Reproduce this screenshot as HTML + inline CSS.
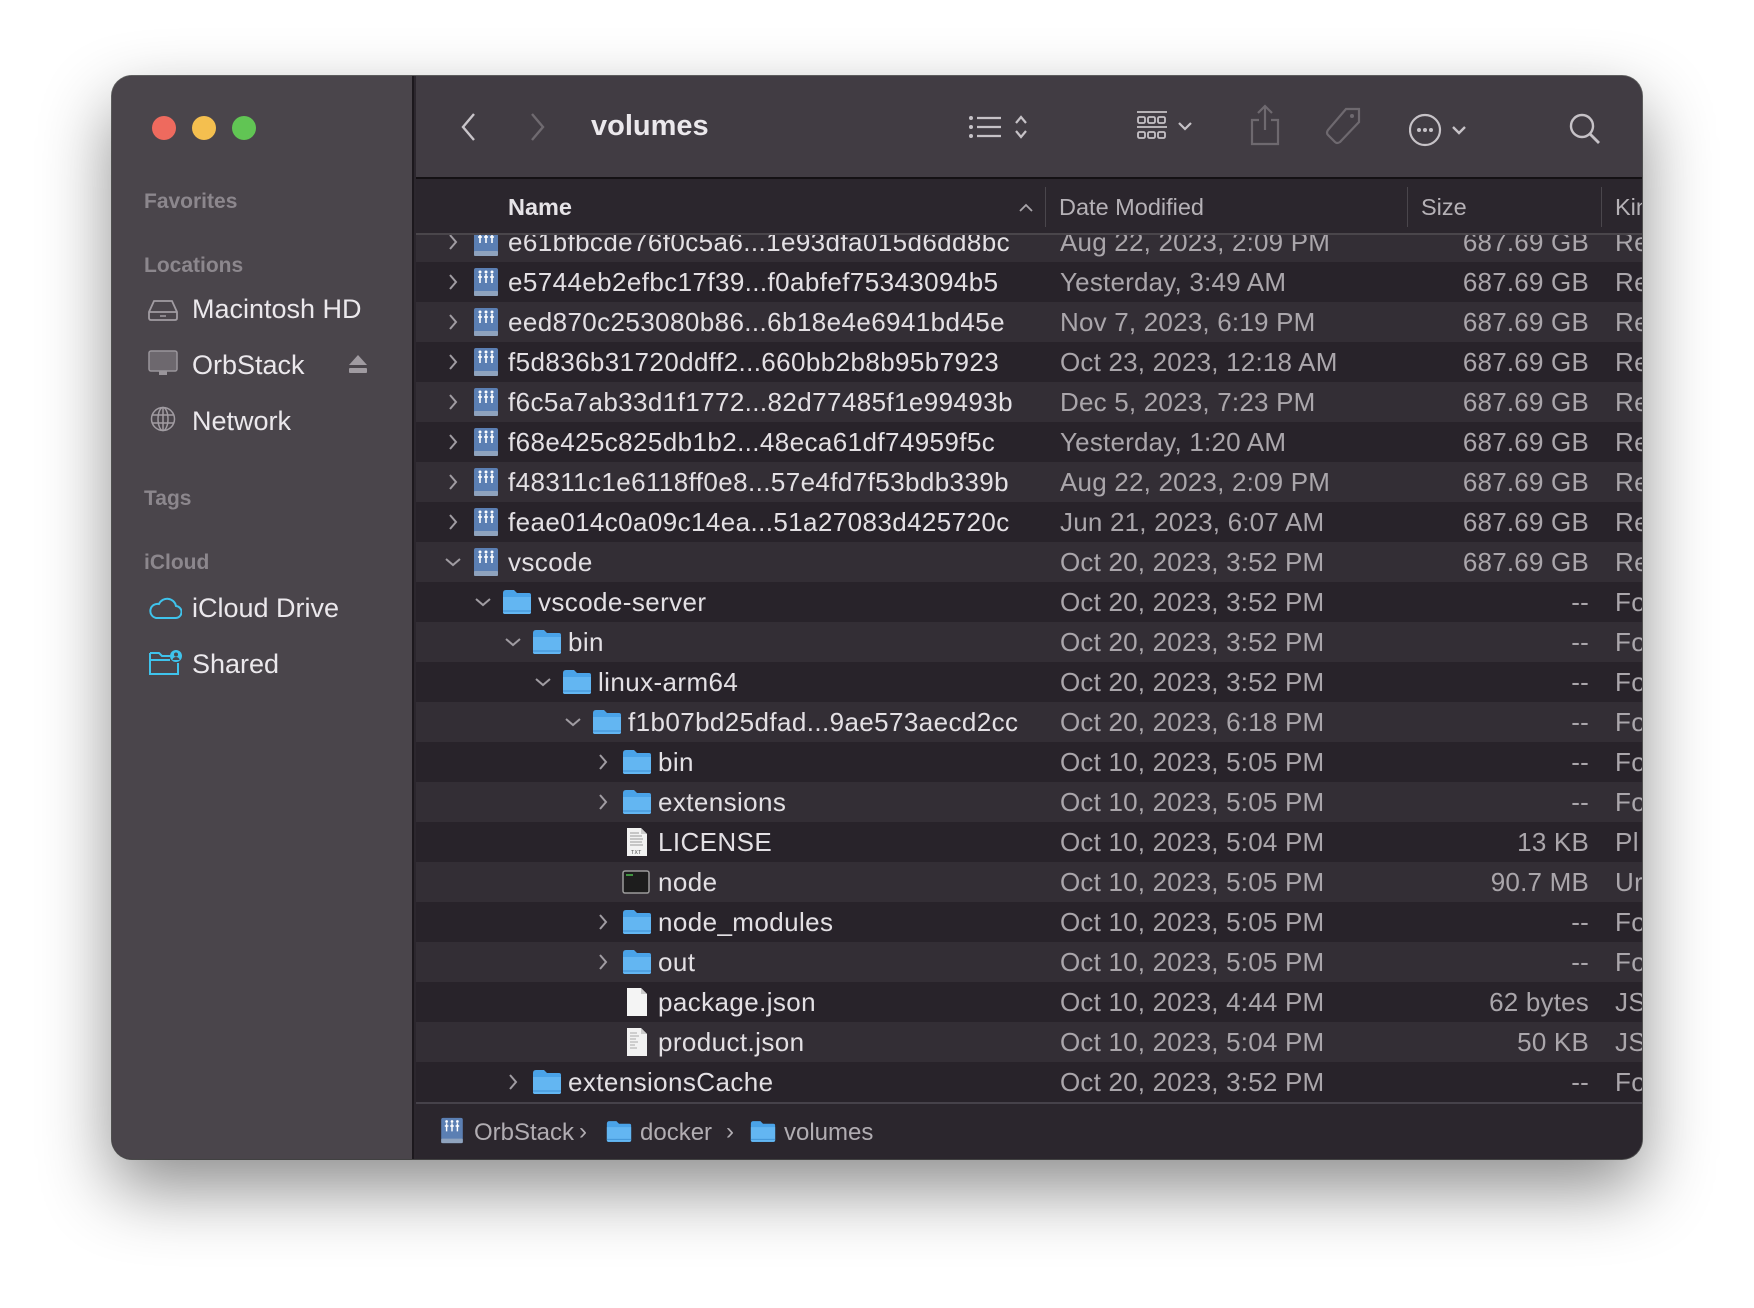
<!DOCTYPE html>
<html><head><meta charset="utf-8">
<style>
*{margin:0;padding:0;box-sizing:border-box}
body{width:1754px;height:1308px;background:#fff;position:relative;overflow:hidden;font-family:"Liberation Sans",sans-serif}
.win{position:absolute;left:112px;top:76px;width:1530px;height:1083px;border-radius:20px;overflow:hidden;background:#2c272e;box-shadow:0 30px 70px rgba(0,0,0,.45),0 0 0 1px rgba(0,0,0,.6)}
.side{position:absolute;left:0;top:0;width:302px;height:100%;background:#4a454b;border-right:2px solid #1c181d}
.tl{position:absolute;top:40px;width:24px;height:24px;border-radius:50%}
.sh{position:absolute;left:32px;font-size:21px;font-weight:bold;color:#8c878d}
.si{position:absolute;left:80px;font-size:27px;color:#ebe8ec}
.tb{position:absolute;left:304px;top:0;right:0;height:103px;background:#413c43;border-bottom:2px solid #141114}
.hdr{position:absolute;left:304px;top:103px;right:0;height:56px;background:#2b262d;border-bottom:2px solid #4a464b;z-index:2}
.hdr span{position:absolute;top:15px;font-size:23.5px;color:#b5b1b6}
.sep{position:absolute;top:8px;width:1px;height:40px;background:#4a464c}
.rows{position:absolute;left:304px;top:146px;right:0;height:882px;overflow:hidden}
.r{position:absolute;left:0;right:0;height:40px;font-size:26px;letter-spacing:0.4px;line-height:40px;color:#e3e0e4}
.r.l{background:#332e35}.r.d{background:#28232a}
.r .n{position:absolute;white-space:nowrap}
.r .dt{position:absolute;left:644px;color:#aaa6ab;letter-spacing:0.2px}
.r .sz{position:absolute;right:53px;color:#aaa6ab;letter-spacing:0.2px}
.r .k{position:absolute;left:1199px;color:#aaa6ab}
.r svg{position:absolute}
.foot{position:absolute;left:304px;right:0;top:1026px;height:57px;background:#2b262d;border-top:2px solid #46424a;font-size:24px;color:#b1adb2}
</style></head><body>
<svg width="0" height="0" style="position:absolute">
<defs>
<symbol id="fold" viewBox="0 0 30 26"><path d="M1 4q0-3 3-3h8l3 3h12q2 0 2 2v17q0 2-2 2H3q-2 0-2-2z" fill="#4aa3e8"/><path d="M1 8h28v15q0 2-2 2H3q-2 0-2-2z" fill="#63b6f2"/><path d="M1 22h28" stroke="#3c8fd2" stroke-width="1"/></symbol>
<symbol id="vol" viewBox="0 0 26 30"><rect x="1" y="1" width="24" height="28" rx="2" fill="#5b7fb3"/><rect x="1" y="24" width="24" height="5" rx="1" fill="#8fa3be"/><g stroke="#fff" stroke-width="1.6" fill="none"><path d="M7 7v9M13 7v9M19 7v9M5 10h4M11 10h4M17 10h4"/></g><circle cx="7" cy="5" r="1.5" fill="#fff"/><circle cx="13" cy="5" r="1.5" fill="#fff"/><circle cx="19" cy="5" r="1.5" fill="#fff"/></symbol>
<symbol id="cr" viewBox="0 0 12 18"><path d="M3 2l6 7-6 7" stroke="#a09ca2" stroke-width="2" fill="none"/></symbol>
<symbol id="cd" viewBox="0 0 18 12"><path d="M2 3l7 6 7-6" stroke="#a09ca2" stroke-width="2" fill="none"/></symbol>
</defs></svg>
<div class="win">
 <div class="side">
  <div class="tl" style="left:40px;background:#ee6a5e"></div>
  <div class="tl" style="left:80px;background:#f4bf4f"></div>
  <div class="tl" style="left:120px;background:#61c554"></div>
  <div class="sh" style="top:114px">Favorites</div>
  <div class="sh" style="top:178px">Locations</div>
  <svg style="position:absolute;left:36px;top:223px" width="30" height="22" viewBox="0 0 30 22"><path d="M6 2h18l5 11v6q0 2-2 2H3q-2 0-2-2v-6z M1 13h28" stroke="#a19ca2" stroke-width="1.8" fill="none"/><path d="M12 17h6" stroke="#a19ca2" stroke-width="1.5"/></svg>
  <div class="si" style="top:218px">Macintosh HD</div>
  <svg style="position:absolute;left:36px;top:274px" width="30" height="26" viewBox="0 0 30 26"><rect x="1" y="1" width="28" height="20" rx="2" fill="#6d686e" stroke="#9a959b" stroke-width="1.5"/><rect x="11" y="21" width="8" height="4" fill="#9a959b"/></svg>
  <div class="si" style="top:274px">OrbStack</div>
  <svg style="position:absolute;left:236px;top:278px" width="20" height="20" viewBox="0 0 20 20"><path d="M10 1l9 10H1z" fill="#a09ba1"/><rect x="1" y="14" width="18" height="5" rx="1" fill="#a09ba1"/></svg>
  <svg style="position:absolute;left:38px;top:330px" width="26" height="26" viewBox="0 0 26 26"><g stroke="#a19ca2" stroke-width="1.5" fill="none"><circle cx="13" cy="13" r="11.5"/><ellipse cx="13" cy="13" rx="5" ry="11.5"/><path d="M2 9h22M2 17h22M13 1.5v23"/></g></svg>
  <div class="si" style="top:330px">Network</div>
  <div class="sh" style="top:411px">Tags</div>
  <div class="sh" style="top:475px">iCloud</div>
  <svg style="position:absolute;left:36px;top:520px" width="34" height="24" viewBox="0 0 34 24"><path d="M8 22h19a6 6 0 0 0 1-12 9 9 0 0 0-17-2 7 7 0 0 0-3 14z" stroke="#3fc3ec" stroke-width="2" fill="none"/></svg>
  <div class="si" style="top:517px">iCloud Drive</div>
  <svg style="position:absolute;left:36px;top:573px" width="34" height="28" viewBox="0 0 34 28"><path d="M2 4h9l3 3h8M2 4v21h28V14M2 11h20" stroke="#3fc3ec" stroke-width="2" fill="none"/><circle cx="28" cy="7" r="6" fill="#3fc3ec"/><circle cx="28" cy="5.5" r="2" fill="#4a454b"/><path d="M24.5 11a3.5 3 0 0 1 7 0" fill="#4a454b"/></svg>
  <div class="si" style="top:573px">Shared</div>
 </div>
 <div class="tb">
  <svg style="position:absolute;left:44px;top:36px" width="16" height="30" viewBox="0 0 16 30"><path d="M14 2L3 15l11 13" stroke="#c9c5ca" stroke-width="2.4" fill="none"/></svg>
  <svg style="position:absolute;left:114px;top:36px" width="16" height="30" viewBox="0 0 16 30"><path d="M2 2l11 13L2 28" stroke="#6f6a70" stroke-width="2.4" fill="none"/></svg>
  <div style="position:absolute;left:175px;top:34px;font-size:29px;font-weight:bold;color:#ebe8ec">volumes</div>
  <svg style="position:absolute;left:552px;top:36px" width="70" height="32" viewBox="0 0 70 32"><g fill="#c6c2c7"><circle cx="3" cy="6" r="2"/><circle cx="3" cy="15" r="2"/><circle cx="3" cy="24" r="2"/></g><g stroke="#c6c2c7" stroke-width="2.2"><path d="M9 6h24M9 15h24M9 24h24"/><path d="M48 11l5-6 5 6M48 19l5 6 5-6" fill="none"/></g></svg>
  <svg style="position:absolute;left:719px;top:34px" width="70" height="36" viewBox="0 0 70 36"><g stroke="#c6c2c7" stroke-width="1.8" fill="none"><path d="M2 2h30M2 17h30"/><rect x="3" y="7" width="7" height="6" rx="1.5"/><rect x="13" y="7" width="7" height="6" rx="1.5"/><rect x="23" y="7" width="7" height="6" rx="1.5"/><rect x="3" y="22" width="7" height="6" rx="1.5"/><rect x="13" y="22" width="7" height="6" rx="1.5"/><rect x="23" y="22" width="7" height="6" rx="1.5"/><path d="M44 13l6 6 6-6" stroke-width="2.2"/></g></svg>
  <svg style="position:absolute;left:832px;top:28px" width="34" height="42" viewBox="0 0 34 42"><g stroke="#6e696f" stroke-width="2.2" fill="none"><path d="M17 2v24M10 9l7-7 7 7M11 16H4v24h26V16h-7"/></g></svg>
  <svg style="position:absolute;left:908px;top:30px" width="40" height="40" viewBox="0 0 40 40"><path d="M22 3h13v13L16 36q-3 2-5 0L4 29q-2-2 0-5z" stroke="#6e696f" stroke-width="2.2" fill="none"/><circle cx="28" cy="10" r="2" fill="#6e696f"/></svg>
  <svg style="position:absolute;left:993px;top:37px" width="60" height="36" viewBox="0 0 60 36"><circle cx="16" cy="17" r="15" stroke="#c6c2c7" stroke-width="2.2" fill="none"/><g fill="#c6c2c7"><circle cx="10" cy="17" r="2"/><circle cx="16" cy="17" r="2"/><circle cx="22" cy="17" r="2"/></g><path d="M44 14l6 6 6-6" stroke="#c6c2c7" stroke-width="2.4" fill="none"/></svg>
  <svg style="position:absolute;left:1152px;top:36px" width="36" height="36" viewBox="0 0 36 36"><circle cx="14" cy="14" r="11" stroke="#c6c2c7" stroke-width="2.4" fill="none"/><path d="M22 22l9 9" stroke="#c6c2c7" stroke-width="2.8"/></svg>
 </div>
 <div class="hdr">
  <span style="left:92px;font-weight:bold;color:#e6e3e7">Name</span>
  <svg style="position:absolute;left:602px;top:22px" width="16" height="12" viewBox="0 0 16 12"><path d="M2 10l6-6 6 6" stroke="#a9a5aa" stroke-width="1.8" fill="none"/></svg>
  <div class="sep" style="left:629px"></div>
  <span style="left:643px">Date Modified</span>
  <div class="sep" style="left:991px"></div>
  <span style="left:1005px">Size</span>
  <div class="sep" style="left:1185px"></div>
  <span style="left:1199px">Kin</span>
 </div>
 <div class="rows">
  <div class="r l" style="top:0"><svg style="left:31px;top:11px" width="12" height="18"><use href="#cr"/></svg><svg style="left:57px;top:5px" width="26" height="30"><use href="#vol"/></svg><span class="n" style="left:92px">e61bfbcde76f0c5a6...1e93dfa015d6dd8bc</span><span class="dt">Aug 22, 2023, 2:09 PM</span><span class="sz">687.69 GB</span><span class="k">Re</span></div>
  <div class="r d" style="top:40px"><svg style="left:31px;top:11px" width="12" height="18"><use href="#cr"/></svg><svg style="left:57px;top:5px" width="26" height="30"><use href="#vol"/></svg><span class="n" style="left:92px">e5744eb2efbc17f39...f0abfef75343094b5</span><span class="dt">Yesterday, 3:49 AM</span><span class="sz">687.69 GB</span><span class="k">Re</span></div>
  <div class="r l" style="top:80px"><svg style="left:31px;top:11px" width="12" height="18"><use href="#cr"/></svg><svg style="left:57px;top:5px" width="26" height="30"><use href="#vol"/></svg><span class="n" style="left:92px">eed870c253080b86...6b18e4e6941bd45e</span><span class="dt">Nov 7, 2023, 6:19 PM</span><span class="sz">687.69 GB</span><span class="k">Re</span></div>
  <div class="r d" style="top:120px"><svg style="left:31px;top:11px" width="12" height="18"><use href="#cr"/></svg><svg style="left:57px;top:5px" width="26" height="30"><use href="#vol"/></svg><span class="n" style="left:92px">f5d836b31720ddff2...660bb2b8b95b7923</span><span class="dt">Oct 23, 2023, 12:18 AM</span><span class="sz">687.69 GB</span><span class="k">Re</span></div>
  <div class="r l" style="top:160px"><svg style="left:31px;top:11px" width="12" height="18"><use href="#cr"/></svg><svg style="left:57px;top:5px" width="26" height="30"><use href="#vol"/></svg><span class="n" style="left:92px">f6c5a7ab33d1f1772...82d77485f1e99493b</span><span class="dt">Dec 5, 2023, 7:23 PM</span><span class="sz">687.69 GB</span><span class="k">Re</span></div>
  <div class="r d" style="top:200px"><svg style="left:31px;top:11px" width="12" height="18"><use href="#cr"/></svg><svg style="left:57px;top:5px" width="26" height="30"><use href="#vol"/></svg><span class="n" style="left:92px">f68e425c825db1b2...48eca61df74959f5c</span><span class="dt">Yesterday, 1:20 AM</span><span class="sz">687.69 GB</span><span class="k">Re</span></div>
  <div class="r l" style="top:240px"><svg style="left:31px;top:11px" width="12" height="18"><use href="#cr"/></svg><svg style="left:57px;top:5px" width="26" height="30"><use href="#vol"/></svg><span class="n" style="left:92px">f48311c1e6118ff0e8...57e4fd7f53bdb339b</span><span class="dt">Aug 22, 2023, 2:09 PM</span><span class="sz">687.69 GB</span><span class="k">Re</span></div>
  <div class="r d" style="top:280px"><svg style="left:31px;top:11px" width="12" height="18"><use href="#cr"/></svg><svg style="left:57px;top:5px" width="26" height="30"><use href="#vol"/></svg><span class="n" style="left:92px">feae014c0a09c14ea...51a27083d425720c</span><span class="dt">Jun 21, 2023, 6:07 AM</span><span class="sz">687.69 GB</span><span class="k">Re</span></div>
  <div class="r l" style="top:320px"><svg style="left:28px;top:14px" width="18" height="12"><use href="#cd"/></svg><svg style="left:57px;top:5px" width="26" height="30"><use href="#vol"/></svg><span class="n" style="left:92px">vscode</span><span class="dt">Oct 20, 2023, 3:52 PM</span><span class="sz">687.69 GB</span><span class="k">Re</span></div>
  <div class="r d" style="top:360px"><svg style="left:58px;top:14px" width="18" height="12"><use href="#cd"/></svg><svg style="left:86px;top:7px" width="30" height="26"><use href="#fold"/></svg><span class="n" style="left:122px">vscode-server</span><span class="dt">Oct 20, 2023, 3:52 PM</span><span class="sz">--</span><span class="k">Fo</span></div>
  <div class="r l" style="top:400px"><svg style="left:88px;top:14px" width="18" height="12"><use href="#cd"/></svg><svg style="left:116px;top:7px" width="30" height="26"><use href="#fold"/></svg><span class="n" style="left:152px">bin</span><span class="dt">Oct 20, 2023, 3:52 PM</span><span class="sz">--</span><span class="k">Fo</span></div>
  <div class="r d" style="top:440px"><svg style="left:118px;top:14px" width="18" height="12"><use href="#cd"/></svg><svg style="left:146px;top:7px" width="30" height="26"><use href="#fold"/></svg><span class="n" style="left:182px">linux-arm64</span><span class="dt">Oct 20, 2023, 3:52 PM</span><span class="sz">--</span><span class="k">Fo</span></div>
  <div class="r l" style="top:480px"><svg style="left:148px;top:14px" width="18" height="12"><use href="#cd"/></svg><svg style="left:176px;top:7px" width="30" height="26"><use href="#fold"/></svg><span class="n" style="left:212px">f1b07bd25dfad...9ae573aecd2cc</span><span class="dt">Oct 20, 2023, 6:18 PM</span><span class="sz">--</span><span class="k">Fo</span></div>
  <div class="r d" style="top:520px"><svg style="left:181px;top:11px" width="12" height="18"><use href="#cr"/></svg><svg style="left:206px;top:7px" width="30" height="26"><use href="#fold"/></svg><span class="n" style="left:242px">bin</span><span class="dt">Oct 10, 2023, 5:05 PM</span><span class="sz">--</span><span class="k">Fo</span></div>
  <div class="r l" style="top:560px"><svg style="left:181px;top:11px" width="12" height="18"><use href="#cr"/></svg><svg style="left:206px;top:7px" width="30" height="26"><use href="#fold"/></svg><span class="n" style="left:242px">extensions</span><span class="dt">Oct 10, 2023, 5:05 PM</span><span class="sz">--</span><span class="k">Fo</span></div>
  <div class="r d" style="top:600px"><svg style="left:210px;top:5px" width="22" height="30" viewBox="0 0 22 30"><path d="M1 1h14l6 6v22H1z" fill="#f2f2f2"/><path d="M15 1v6h6" fill="#ccc"/><g stroke="#999" stroke-width="1"><path d="M4 6h9M4 9h12M4 12h13M4 15h12M4 18h13"/></g><text x="5" y="27" font-size="5" fill="#444" font-family="Liberation Sans">TXT</text></svg><span class="n" style="left:242px">LICENSE</span><span class="dt">Oct 10, 2023, 5:04 PM</span><span class="sz">13 KB</span><span class="k">Pl</span></div>
  <div class="r l" style="top:640px"><svg style="left:206px;top:8px" width="28" height="24" viewBox="0 0 28 24"><rect x="1" y="1" width="26" height="22" rx="2" fill="#1d1d1d" stroke="#9c9c9c" stroke-width="1.5"/><path d="M4 5h7" stroke="#4cbb4c" stroke-width="1.5"/></svg><span class="n" style="left:242px">node</span><span class="dt">Oct 10, 2023, 5:05 PM</span><span class="sz">90.7 MB</span><span class="k">Ur</span></div>
  <div class="r d" style="top:680px"><svg style="left:181px;top:11px" width="12" height="18"><use href="#cr"/></svg><svg style="left:206px;top:7px" width="30" height="26"><use href="#fold"/></svg><span class="n" style="left:242px">node_modules</span><span class="dt">Oct 10, 2023, 5:05 PM</span><span class="sz">--</span><span class="k">Fo</span></div>
  <div class="r l" style="top:720px"><svg style="left:181px;top:11px" width="12" height="18"><use href="#cr"/></svg><svg style="left:206px;top:7px" width="30" height="26"><use href="#fold"/></svg><span class="n" style="left:242px">out</span><span class="dt">Oct 10, 2023, 5:05 PM</span><span class="sz">--</span><span class="k">Fo</span></div>
  <div class="r d" style="top:760px"><svg style="left:210px;top:5px" width="22" height="30" viewBox="0 0 22 30"><path d="M1 1h14l6 6v22H1z" fill="#f4f4f4"/><path d="M15 1v6h6" fill="#ccc"/></svg><span class="n" style="left:242px">package.json</span><span class="dt">Oct 10, 2023, 4:44 PM</span><span class="sz">62 bytes</span><span class="k">JS</span></div>
  <div class="r l" style="top:800px"><svg style="left:210px;top:5px" width="22" height="30" viewBox="0 0 22 30"><path d="M1 1h14l6 6v22H1z" fill="#f2f2f2"/><path d="M15 1v6h6" fill="#ccc"/><g stroke="#aaa" stroke-width="1"><path d="M4 6h7M4 9h9M4 12h6M4 15h8M4 18h5M4 21h7"/></g></svg><span class="n" style="left:242px">product.json</span><span class="dt">Oct 10, 2023, 5:04 PM</span><span class="sz">50 KB</span><span class="k">JS</span></div>
  <div class="r d" style="top:840px"><svg style="left:91px;top:11px" width="12" height="18"><use href="#cr"/></svg><svg style="left:116px;top:7px" width="30" height="26"><use href="#fold"/></svg><span class="n" style="left:152px">extensionsCache</span><span class="dt">Oct 20, 2023, 3:52 PM</span><span class="sz">--</span><span class="k">Fo</span></div>
 </div>
 <div class="foot">
  <svg style="position:absolute;left:24px;top:13px" width="24" height="27"><use href="#vol"/></svg>
  <span style="position:absolute;left:58px;top:15px">OrbStack</span>
  <span style="position:absolute;left:163px;top:14px">›</span>
  <svg style="position:absolute;left:190px;top:16px" width="26" height="23"><use href="#fold"/></svg>
  <span style="position:absolute;left:224px;top:15px">docker</span>
  <span style="position:absolute;left:310px;top:14px">›</span>
  <svg style="position:absolute;left:334px;top:16px" width="26" height="23"><use href="#fold"/></svg>
  <span style="position:absolute;left:368px;top:15px">volumes</span>
 </div>
</div>
</body></html>
